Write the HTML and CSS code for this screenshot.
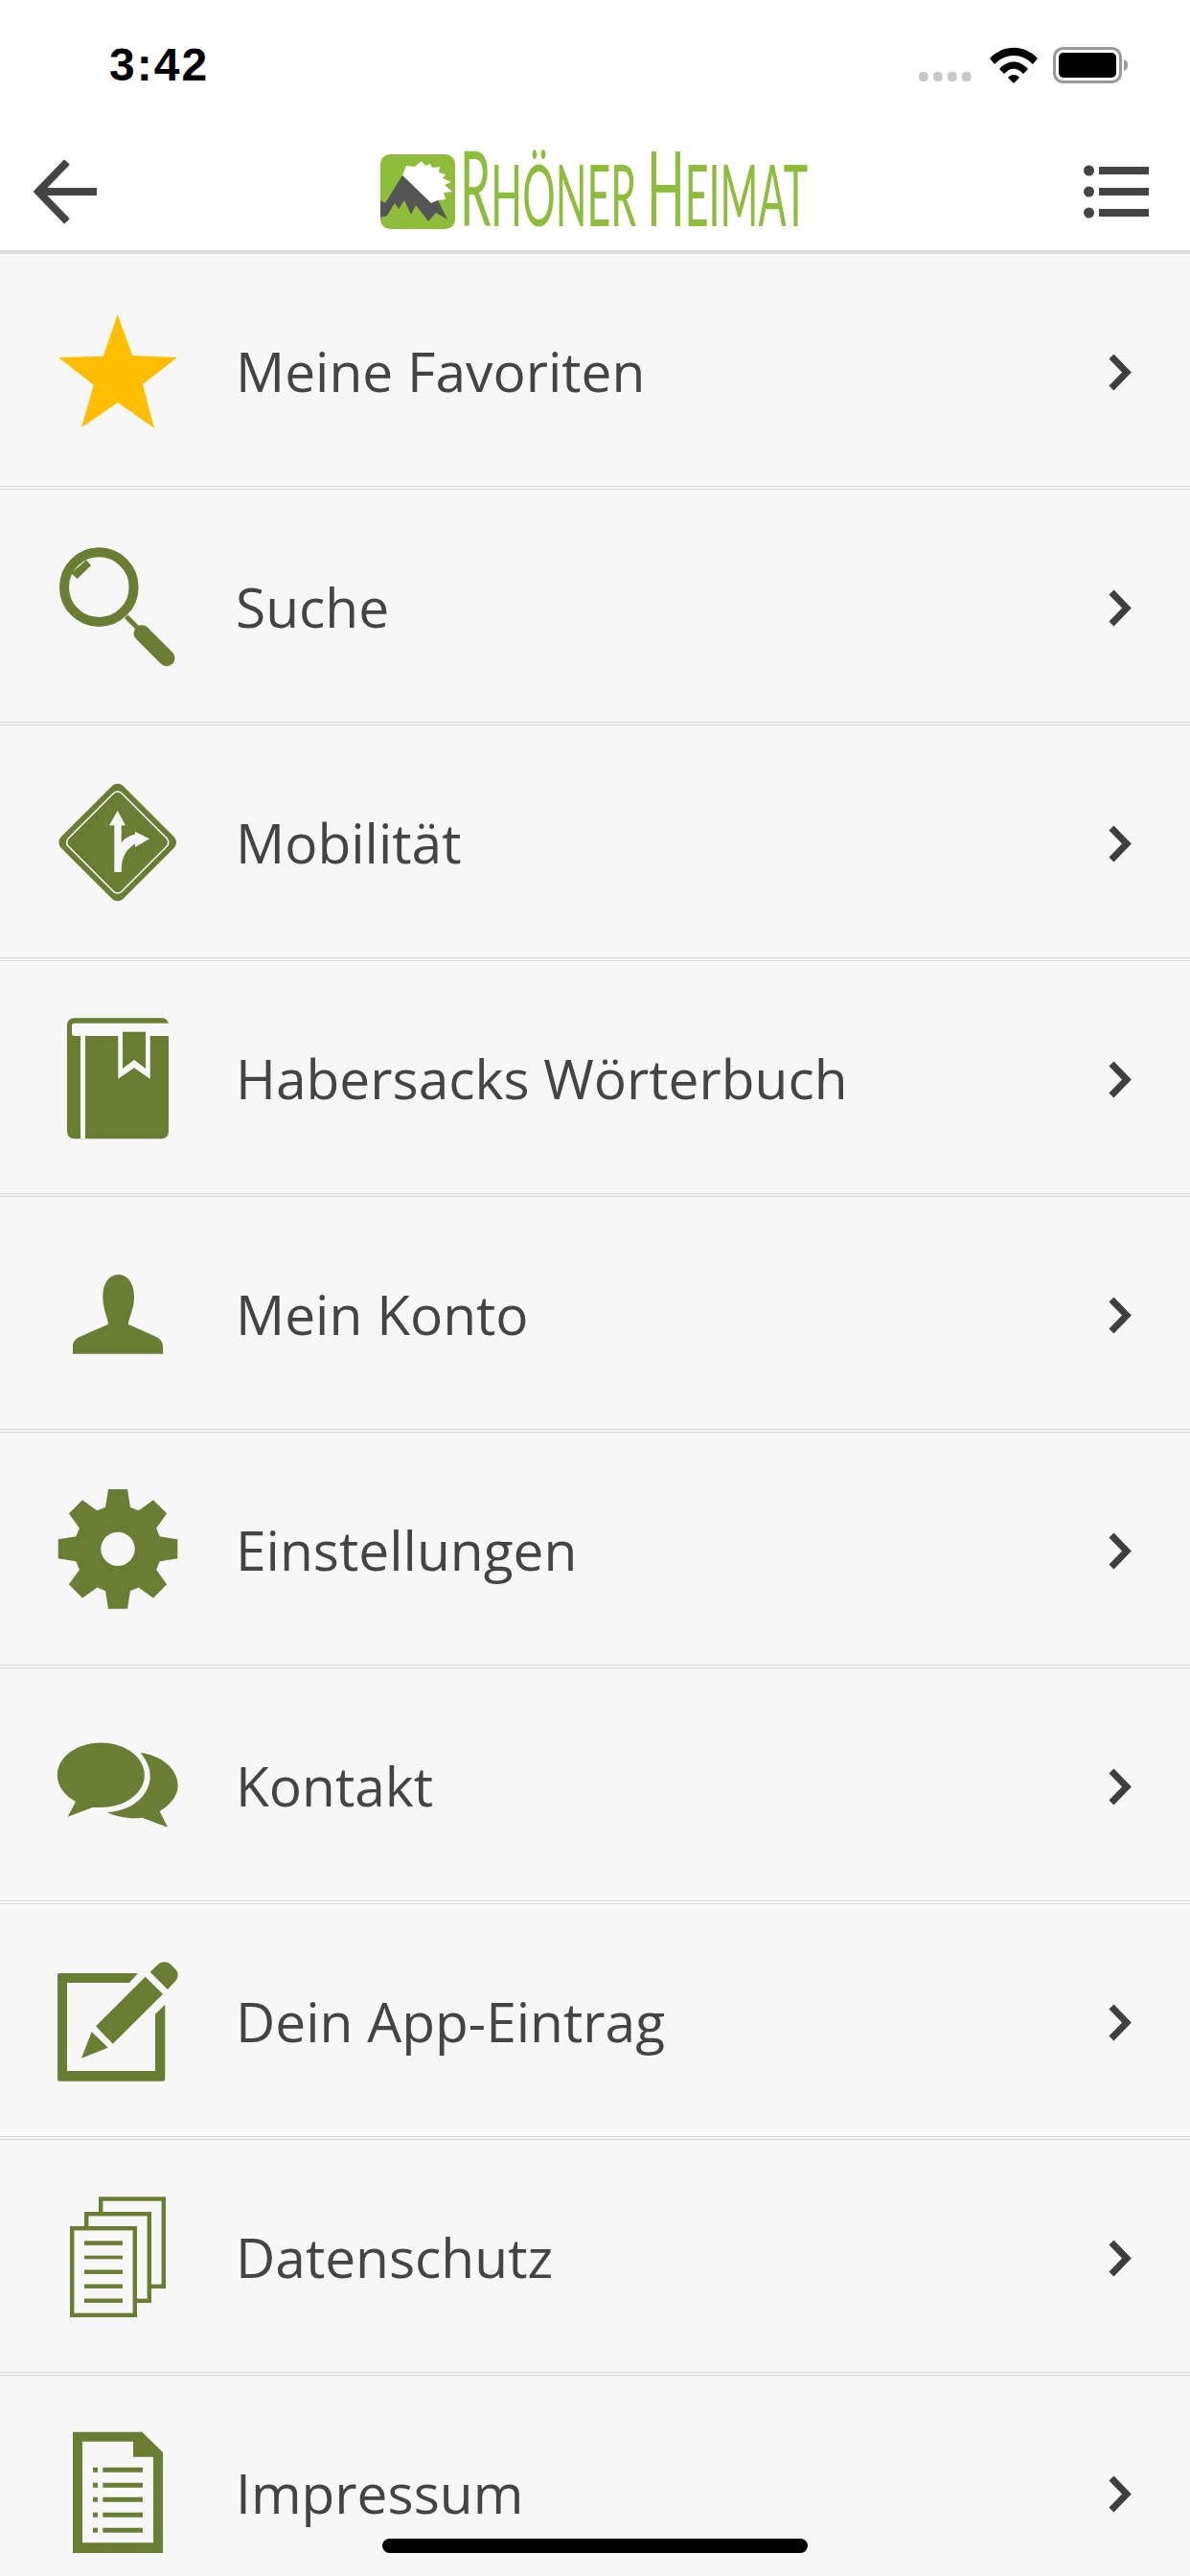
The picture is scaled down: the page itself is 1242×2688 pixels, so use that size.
FILE: index.html
```html
<!DOCTYPE html>
<html lang="de">
<head>
    <meta charset="UTF-8">
    <meta name="viewport" content="width=device-width, initial-scale=1.0">
    <title>Rhöner Heimat</title>
    <link rel="stylesheet" href="styles.css">
</head>
<body>

    <div class="status">
        <span class="time">3:42</span>
        <div class="status-icons">
            <svg width="60" height="14" viewBox="0 0 60 14" class="dots">
                <rect x="2" y="2" width="9.5" height="10" rx="4"/>
                <rect x="17" y="2" width="9.5" height="10" rx="4"/>
                <rect x="32" y="2" width="9.5" height="10" rx="4"/>
                <rect x="47" y="2" width="9.5" height="10" rx="4"/>
            </svg>
            <svg width="50" height="38" viewBox="0 0 50 38" class="wifi">
                <path d="M0 12 C14 -3 36 -3 50 12 L45 18 C33 6 17 6 5 18 Z"/>
                <path d="M10 23 C19 13 31 13 40 23 L35 28 C28 21 22 21 15 28 Z"/>
                <path d="M19 32 C22 28 28 28 31 32 L25 38 Z"/>
            </svg>
            <svg width="78" height="38" viewBox="0 0 78 38" class="battery">
                <rect x="1.5" y="1.5" width="69" height="35" rx="9" class="battery-shell"/>
                <rect x="6" y="6" width="60" height="26" rx="5"/>
                <path d="M74 13 C77 14 78 16 78 19 C78 22 77 24 74 25 Z" class="battery-cap"/>
            </svg>
        </div>
    </div>

    <header class="topbar">
        <svg class="back" width="66" height="66" viewBox="0 0 66 66">
            <path d="M35 2 L5 33 L35 64 M5 33 H66"/>
        </svg>
        <div class="logo">
            <svg width="78" height="78" viewBox="0 0 78 78" class="logo-mark">
                <rect width="78" height="78" rx="10" class="logo-green"/>
                <path d="M27 12 L36 13 L43 7 L47 12 L52 10 L54 14 L62 13 L61 19 L68 21 L65 25 L74 29 L67 32 L75 39 L66 40 L68 47 L60 48 L53 51 L23 22 Z" class="logo-sun"/>
                <path d="M0 48 L5 51 L23 22 L53 51 L60 48 L70 68 L58 61 L50 70 L37 53 L32 63 L25 48 L19 57 L15 51 L7 64 L0 66 Z" class="logo-rock"/>
            </svg>
            <span class="logo-text"><span class="big">R</span>HÖNER <span class="big">H</span>EIMAT</span>
        </div>
        <svg class="burger" width="68" height="56" viewBox="0 0 68 56">
            <ellipse cx="5.5" cy="6" rx="5.5" ry="5.5"/>
            <ellipse cx="5.5" cy="28" rx="5.5" ry="5.5"/>
            <ellipse cx="5.5" cy="50" rx="5.5" ry="5.5"/>
            <rect x="16" y="2" width="52" height="8"/>
            <rect x="16" y="24" width="52" height="8"/>
            <rect x="16" y="46" width="52" height="8"/>
        </svg>
    </header>

    <nav class="menu">
        <a class="row">
            <svg class="icon" viewBox="0 0 140 140">
                <path class="star" d="M70.7 12.3 L86.3 55 L133 57 L97 85 L109 130.7 L71 104 L33 130 L45.7 85.7 L9 57 L55.7 55.7 Z"/>
            </svg>
            <span class="label">Meine Favoriten</span>
            <svg class="chev" width="30" height="44" viewBox="0 0 30 44"><path d="M5 5 L21 21.5 L5 38"/></svg>
        </a>
        <a class="row">
            <svg class="icon" viewBox="0 0.25 140 140">
                <circle cx="51.3" cy="50.9" r="36.3" class="ring"/>
                <path d="M38 22.6 L43 28.2 L28.7 42.2 L22.3 36.6 Z"/>
                <path d="M79.7 81.6 L96 98" class="thin"/>
                <path d="M96 99 L122 125" class="grip"/>
            </svg>
            <span class="label">Suche</span>
            <svg class="chev" width="30" height="44" viewBox="0 0 30 44"><path d="M5 5 L21 21.5 L5 38"/></svg>
        </a>
        <a class="row">
            <svg class="icon" viewBox="0 0.5 140 140">
                <rect x="25" y="25.8" width="91.4" height="91.4" rx="8" transform="rotate(45 70.7 71.5)"/>
                <rect x="31.45" y="32.25" width="78.5" height="78.5" rx="6" transform="rotate(45 70.7 71.5)" class="sign-line"/>
                <path class="cut" d="M70.7 38.5 L79 53.8 H74.7 V72 C77 68 82 65 89 63 V60.2 L104 67.8 L89 76.5 V73 C78 80 74.7 88 74.7 102.5 H67.3 V53.8 H62 Z"/>
            </svg>
            <span class="label">Mobilität</span>
            <svg class="chev" width="30" height="44" viewBox="0 0 30 44"><path d="M5 5 L21 21.5 L5 38"/></svg>
        </a>
        <a class="row">
            <svg class="icon" viewBox="0 0.75 140 140">
                <path d="M26 9 H118 Q121 9 124 14.4 V127 Q124 135 116 135 H26 Q18 135 18 127 V17 Q18 9 26 9 Z"/>
                <path class="cut" d="M26 14.4 H124 V27.8 H26 Q23 27.8 23 25 V17 Q23 14.4 26 14.4 Z"/>
                <rect class="cut" x="32" y="27" width="5" height="108"/>
                <path class="cut" d="M71.3 23.4 H104.7 V72.4 L88 61 L71.3 72.4 Z"/>
                <path d="M76 23.4 H100 V61.8 L88 52.7 L76 61.8 Z"/>
            </svg>
            <span class="label">Habersacks Wörterbuch</span>
            <svg class="chev" width="30" height="44" viewBox="0 0 30 44"><path d="M5 5 L21 21.5 L5 38"/></svg>
        </a>
        <a class="row">
            <svg class="icon" viewBox="0 1 140 140">
                <path d="M24 113.7 V106 C24 101 27 98 31 96 L60.7 83 C61.5 78 55.3 68 55.3 54 C55.3 40 62 31 71.5 31 C81 31 88 40 88 54 C88 68 81.5 78 82 83 L111.3 96 C115 98 118 101 118 106 V113.7 Z"/>
            </svg>
            <span class="label">Mein Konto</span>
            <svg class="chev" width="30" height="44" viewBox="0 0 30 44"><path d="M5 5 L21 21.5 L5 38"/></svg>
        </a>
        <a class="row">
            <svg class="icon" viewBox="0 1.25 140 140">
                <polygon transform="translate(71 71.6)" points="-13,-43.7 -10,-62.3 10,-62.3 13,-43.7 21.7,-40.1 37,-51.1 51.1,-37 40.1,-21.7 43.7,-13 62.3,-10 62.3,10 43.7,13 40.1,21.7 51.1,37 37,51.1 21.7,40.1 13,43.7 10,62.3 -10,62.3 -13,43.7 -21.7,40.1 -37,51.1 -51.1,37 -40.1,21.7 -43.7,13 -62.3,10 -62.3,-10 -43.7,-13 -40.1,-21.7 -51.1,-37 -37,-51.1 -21.7,-40.1"/>
                <circle class="cut" cx="71" cy="71.6" r="17.7"/>
            </svg>
            <span class="label">Einstellungen</span>
            <svg class="chev" width="30" height="44" viewBox="0 0 30 44"><path d="M5 5 L21 21.5 L5 38"/></svg>
        </a>
        <a class="row">
            <svg class="icon" viewBox="0 1.5 140 140">
                <path d="M53.4 28 C78.5 28 98.9 43 98.9 61.8 C98.9 80.5 78.5 95.5 53.4 95.5 H44.7 L18.7 105.2 L27 89.5 C15 83 7.9 73 7.9 61.8 C7.9 43 28.3 28 53.4 28 Z"/>
                <path d="M94.7 38.5 C116 41 133.7 55 133.7 72.8 C133.7 83 126 93 114.7 99.5 L123 116.2 L96.3 106.2 C84 108 70 105.5 59.7 100.5 C84 100 104.7 84 104.7 62.8 C104.7 53 100 45 94.7 38.5 Z"/>
            </svg>
            <span class="label">Kontakt</span>
            <svg class="chev" width="30" height="44" viewBox="0 0 30 44"><path d="M5 5 L21 21.5 L5 38"/></svg>
        </a>
        <a class="row">
            <svg class="icon" viewBox="0 1.75 140 140">
                <path d="M10 22.75 H92 L83 32.75 H18 V124.75 H110 V65.4 L120.3 55.4 V133 Q120.3 135.4 118 135.4 H10 Q8 135.4 8 133 V25 Q8 22.75 10 22.75 Z"/>
                <path d="M48 78.1 L99.7 26.4 L118 44.4 L65.7 96.4 Z"/>
                <path d="M43.7 83.75 L60.7 100.4 L33 111.4 Z"/>
                <path d="M104.7 21.4 L113 13.5 C116 10.5 122 10 126 13.5 L131 18.5 C134.5 22 134.5 27 131.5 30.5 L123 39.75 Z"/>
            </svg>
            <span class="label">Dein App-Eintrag</span>
            <svg class="chev" width="30" height="44" viewBox="0 0 30 44"><path d="M5 5 L21 21.5 L5 38"/></svg>
        </a>
        <a class="row">
            <svg class="icon" viewBox="0 2 140 140">
                <rect class="sheet" x="53.2" y="12.5" width="65.6" height="91.3"/>
                <rect class="sheet" x="38.2" y="28.2" width="65.6" height="90.6"/>
                <rect class="sheet" x="23.2" y="43.2" width="65.6" height="90.6"/>
                <rect x="36" y="56.3" width="40" height="4.6"/>
                <rect x="36" y="71.7" width="40" height="3.6"/>
                <rect x="36" y="86.5" width="40" height="4.4"/>
                <rect x="36" y="101.5" width="40" height="4.4"/>
                <rect x="36" y="116.5" width="40" height="4.4"/>
            </svg>
            <span class="label">Datenschutz</span>
            <svg class="chev" width="30" height="44" viewBox="0 0 30 44"><path d="M5 5 L21 21.5 L5 38"/></svg>
        </a>
        <a class="row">
            <svg class="icon" viewBox="0 2.25 140 140">
                <path fill-rule="evenodd" d="M24 10 H96.3 L118 31.25 V136.25 H24 Z M34 20 V125.6 H108 V36 H87 V20 Z"/>
                <rect x="45" y="47" width="5" height="5"/><rect x="55.3" y="47" width="41.7" height="5"/>
                <rect x="45" y="63" width="5" height="5"/><rect x="55.3" y="63" width="41.7" height="5"/>
                <rect x="45" y="78" width="5" height="5"/><rect x="55.3" y="78" width="41.7" height="5"/>
                <rect x="45" y="94" width="5" height="5"/><rect x="55.3" y="94" width="41.7" height="5"/>
                <rect x="45" y="110" width="5" height="5"/><rect x="55.3" y="110" width="41.7" height="5"/>
            </svg>
            <span class="label">Impressum</span>
            <svg class="chev" width="30" height="44" viewBox="0 0 30 44"><path d="M5 5 L21 21.5 L5 38"/></svg>
        </a>
    </nav>

    <div class="home-bar"></div>

</body>
</html>
```

FILE: styles.css
```css
html, body {
    margin: 0;
    padding: 0;
}

body {
    position: relative;
    width: 1242px;
    height: 2688px;
    overflow: hidden;
    background-color: #f7f7f7;
    font-family: "Open Sans", Arial, sans-serif;
    color: #444444;
}

.status {
    height: 132px;
    background-color: #ffffff;
    display: flex;
    justify-content: space-between;
    padding: 40px 65px 0 114px;
    box-sizing: border-box;
}

.time {
    font-family: "Liberation Sans", Arial, sans-serif;
    font-weight: bold;
    font-size: 48px;
    line-height: 56px;
    letter-spacing: 2px;
    color: #000000;
}

.status-icons {
    display: flex;
    align-items: flex-start;
    gap: 16px;
    padding-top: 9px;
}

.dots {
    margin-top: 24px;
    fill: #c8c8c8;
}

.wifi {
    fill: #000000;
}

.battery {
    fill: #000000;
}

.battery-shell {
    fill: none;
    stroke: #999999;
    stroke-width: 3;
}

.battery-cap {
    fill: #999999;
}

.topbar {
    height: 129px;
    background-color: #ffffff;
    border-bottom: 4px solid #dddddd;
    display: flex;
    align-items: center;
    justify-content: space-between;
    padding: 0 43px 0 35px;
    position: relative;
}

.back {
    fill: none;
    stroke: #444444;
    stroke-width: 8;
    margin-top: 6px;
}

.burger {
    fill: #444444;
    margin-top: 6px;
}

.logo {
    display: flex;
    align-items: center;
    gap: 5px;
    margin: 6px 0 0 3px;
}

.logo-green {
    fill: #8dbd3a;
}

.logo-sun {
    fill: #ffffff;
}

.logo-rock {
    fill: #555555;
}

.logo-text {
    display: block;
    width: 358px;
    font-family: "Lato", sans-serif;
    font-size: 90px;
    line-height: 78px;
    color: #8dbd3a;
    white-space: nowrap;
    transform: translateY(-2px) scaleX(0.478);
    transform-origin: left center;
}

.logo-text .big {
    font-size: 108px;
}

.menu {
    display: flex;
    flex-direction: column;
}

.row {
    flex: none;
    height: 242px;
    border-bottom: 4px double #d9d9d9;
    display: flex;
    align-items: center;
    padding: 0 57px 0 52px;
    text-decoration: none;
    color: #444444;
}

.icon {
    flex: none;
    width: 140px;
    height: 140px;
    fill: #6a7e33;
}

.icon .cut {
    fill: #f7f7f7;
}

.icon .star {
    fill: #ffbf00;
}

.icon .ring {
    fill: none;
    stroke: #6a7e33;
    stroke-width: 10;
}

.icon .thin {
    fill: none;
    stroke: #6a7e33;
    stroke-width: 5;
}

.icon .grip {
    fill: none;
    stroke: #6a7e33;
    stroke-width: 17;
    stroke-linecap: round;
}

.icon .sign-line {
    fill: none;
    stroke: #f7f7f7;
    stroke-width: 1.6;
}

.icon .sheet {
    fill: #f7f7f7;
    stroke: #6a7e33;
    stroke-width: 4.4;
}

.label {
    flex: 1;
    margin: 1px 0 0 54px;
    font-size: 56.9px;
    line-height: 80px;
}

.chev {
    flex: none;
    fill: none;
    stroke: #3f3f3f;
    stroke-width: 7;
    margin-top: 6px;
}

.home-bar {
    position: absolute;
    left: 399px;
    top: 2649px;
    width: 444px;
    height: 15px;
    border-radius: 8px;
    background-color: #000000;
}
```
